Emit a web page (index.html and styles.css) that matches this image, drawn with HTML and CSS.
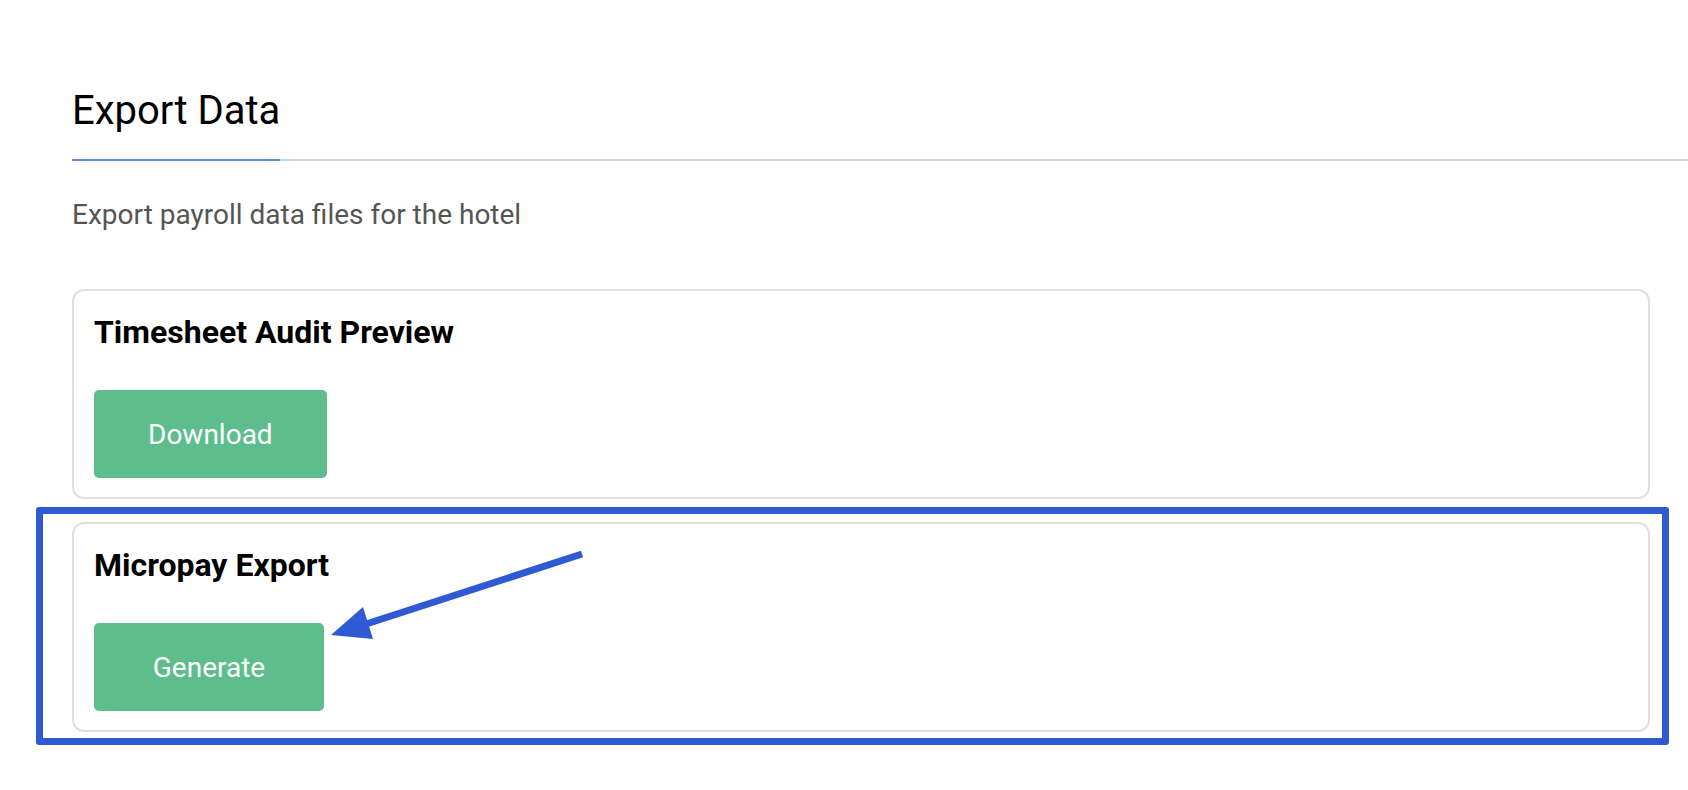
FILE: index.html
```html
<!DOCTYPE html>
<html lang="en">
<head>
    <meta charset="UTF-8">
    <meta name="viewport" content="width=device-width, initial-scale=1.0">
    <title>Export Data</title>
    <link rel="stylesheet" href="styles.css">
</head>
<body>
    <div class="page">
        <div class="tabs">
            <div class="tab active">
                <h1>Export Data</h1>
            </div>
        </div>
        <p class="subtitle">Export payroll data files for the hotel</p>

        <div class="export-list">
            <div class="export-card">
                <h2>Timesheet Audit Preview</h2>
                <button class="btn-green">Download</button>
            </div>
            <div class="export-card">
                <h2>Micropay Export</h2>
                <button class="btn-green">Generate</button>
            </div>
        </div>
    </div>

    <!-- annotation overlay -->
    <div class="highlight-box"></div>
    <svg class="arrow" width="1688" height="790" viewBox="0 0 1688 790">
        <line x1="582" y1="554" x2="360" y2="626" stroke="#2e5bd3" stroke-width="7" />
        <polygon points="331,635 363,607 373,639" fill="#2e5bd3" />
    </svg>
</body>
</html>
```

FILE: styles.css
```css
body {
    margin: 0;
    background-color: #fff;
    color: #000;
    font-family: Roboto, "Liberation Sans", sans-serif;
}

.page {
    padding: 87px 38px 0 72px;
}

.tabs {
    display: flex;
    border-bottom: 2px solid #cfd5e6;
    margin-right: -38px;
}

.tab {
    padding-bottom: 25px;
    margin-bottom: -2px;
}

.tab.active {
    border-bottom: 2px solid #5b8fde;
}

h1 {
    margin: 0;
    font-size: 40px;
    line-height: 47px;
    font-weight: 400;
}

.subtitle {
    margin: 37px 0 0;
    font-size: 28px;
    line-height: 33px;
    color: #555;
}

.export-list {
    display: flex;
    flex-direction: column;
    gap: 23px;
    margin-top: 58px;
}

.export-card {
    border: 2px solid #e0e0e0;
    border-radius: 12px;
    padding: 22px 20px 19px 20px;
}

.export-card h2 {
    margin: 0 0 39px;
    font-size: 32px;
    line-height: 38px;
    font-weight: 700;
}

.btn-green {
    display: flex;
    align-items: center;
    justify-content: center;
    height: 88px;
    min-width: 230px;
    padding: 0 54px;
    border: none;
    border-radius: 5px;
    background-color: #5dbd8c;
    color: #fff;
    font-family: inherit;
    font-size: 28px;
    cursor: pointer;
}

.highlight-box {
    position: absolute;
    left: 36px;
    top: 507px;
    width: 1619px;
    height: 224px;
    border: 7px solid #2e5bd3;
    border-radius: 3px;
}

.arrow {
    position: absolute;
    left: 0;
    top: 0;
    pointer-events: none;
}
```
